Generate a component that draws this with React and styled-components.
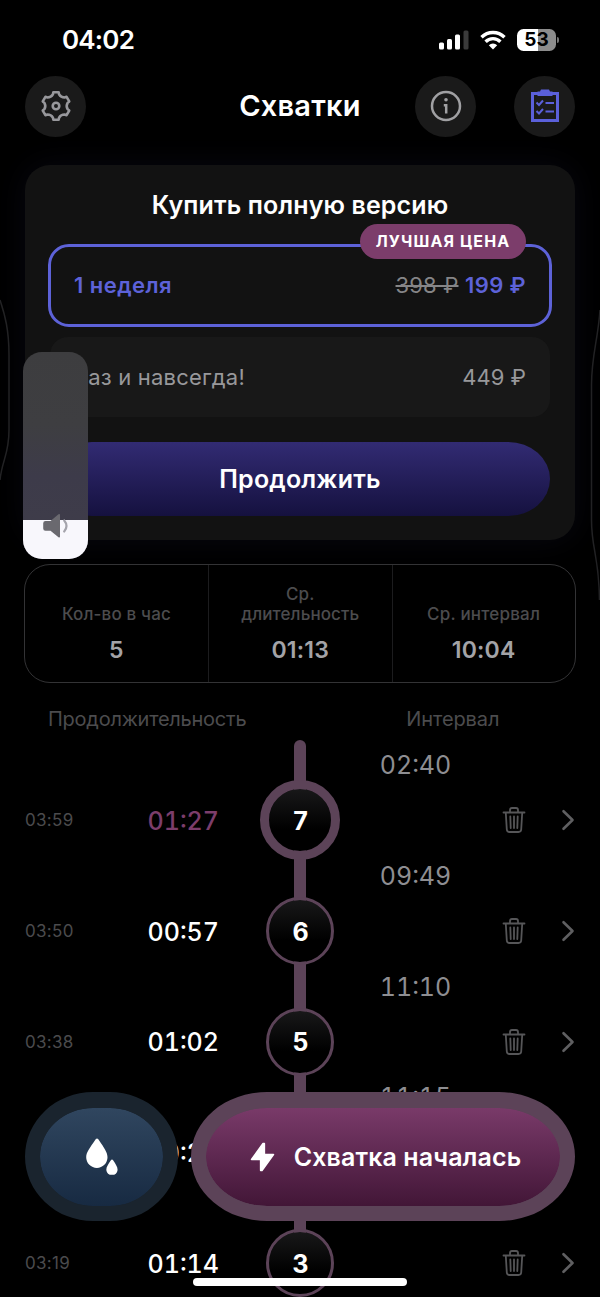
import React from "react";
import styled, { createGlobalStyle } from "styled-components";

const GlobalStyle = createGlobalStyle`
    * { box-sizing: border-box; }
    body {
        margin: 0;
        background: #000;
        font-family: Inter, "Liberation Sans", sans-serif;
        color: #fff;
    }
    button { font-family: inherit; color: inherit; border: none; padding: 0; }
`;

const Screen = styled.div`
    position: relative;
    width: 600px;
    height: 1297px;
    overflow: hidden;
    background: #000;
    white-space: nowrap;
`;

const Label = styled.span`
    font-size: ${(p) => p.$size}px;
    font-weight: ${(p) => p.$weight || 400};
    letter-spacing: ${(p) => p.$track || 0}px;
    color: ${(p) => p.$color || "inherit"};
    line-height: 1.2;
`;

const StatusBar = styled.div`
    display: flex;
    align-items: center;
    justify-content: space-between;
    height: 75px;
    padding: 5px 41px 0 62px;
`;

const StatusIcons = styled.div`
    display: flex;
    align-items: center;
    gap: 11px;
`;

const Battery = styled.div`
    position: relative;
    width: 39px;
    height: 22px;
    margin-right: 3px;
    border-radius: 6.5px;
    background: linear-gradient(90deg, #fff 53%, #8c8c8c 53%);
    color: #000;
    font-size: 19px;
    font-weight: 700;
    line-height: 22px;
    text-align: center;

    &::after {
        content: "";
        position: absolute;
        right: -3px;
        top: 8px;
        width: 2px;
        height: 6px;
        border-radius: 0 2px 2px 0;
        background: #777;
    }
`;

const Header = styled.header`
    display: grid;
    grid-template-columns: 160px 1fr 160px;
    align-items: center;
    height: 62px;
    padding: 0 25px;
    text-align: center;
`;

const HeaderActions = styled.div`
    display: flex;
    justify-content: space-between;
`;

const RoundButton = styled.button`
    display: grid;
    place-items: center;
    width: 61px;
    height: 61px;
    border-radius: 50%;
    background: #1a1a1a;
`;

const Offer = styled.section`
    display: flex;
    flex-direction: column;
    height: 375px;
    margin: 28px 25px 0;
    padding: 25px 25px 24px;
    border-radius: 25px;
    background: #121212;
    box-shadow: 0 0 32px rgba(60, 60, 130, 0.13);
`;

const OfferTitle = styled.h2`
    margin: 0;
    font-size: 25px;
    font-weight: 600;
    letter-spacing: 0.12px;
    line-height: 31px;
    text-align: center;
`;

const Plan = styled.div`
    position: relative;
    display: flex;
    align-items: center;
    justify-content: space-between;
    height: ${(p) => (p.$active ? 83 : 80)}px;
    margin: ${(p) => (p.$active ? "23px -2px 0" : "10px 0 0")};
    padding: 0 ${(p) => (p.$active ? 23 : 24)}px;
    border: ${(p) => (p.$active ? "3px solid #5d62d8" : "none")};
    border-radius: ${(p) => (p.$active ? 21 : 18)}px;
    background: ${(p) => (p.$active ? "transparent" : "#181818")};
`;

const Badge = styled.div`
    position: absolute;
    right: 23px;
    top: -23px;
    display: grid;
    place-items: center;
    width: 166px;
    height: 35px;
    border-radius: 18px;
    background: #7c3d6b;
`;

const Prices = styled.div`
    display: flex;
    gap: 6.5px;

    s { text-decoration-thickness: 1.5px; }
`;

const ContinueButton = styled.button`
    height: 74px;
    margin-top: 25px;
    border-radius: 42px / 37px;
    background: linear-gradient(#322b73, #15113f);
`;

const Stats = styled.section`
    display: grid;
    grid-template-columns: repeat(3, 1fr);
    height: 119px;
    margin: 24px 24px 0;
    border: 1.5px solid #333335;
    border-radius: 26px;
`;

const Stat = styled.div`
    display: flex;
    flex-direction: column;
    align-items: center;
    justify-content: flex-end;
    gap: 13px;
    padding: 0 0.5px 17px 0;
    text-align: center;
    white-space: pre-line;

    & + & { border-left: 1.5px solid #1c1c1e; }
`;

const Columns = styled.div`
    display: flex;
    height: 54px;
    padding: 24px 0 0 48px;

    span:last-child { margin-left: 160px; }
`;

const Timeline = styled.section`
    position: relative;
    font-variant-numeric: tabular-nums;

    &::before {
        content: "";
        position: absolute;
        left: 294px;
        top: 3px;
        bottom: 0;
        width: 12px;
        border-radius: 6px 6px 0 0;
        background: #5c4358;
    }
`;

const Entry = styled.div`
    position: relative;
    display: grid;
    grid-template-rows: 55.35px 55.4px;
    height: 110.75px;
`;

const Interval = styled.div`
    display: flex;
    align-items: center;
    justify-content: center;
    width: 140px;
    padding-top: 1px;
    margin-left: 345.5px;
`;

const EntryLine = styled.div`
    display: grid;
    grid-template-columns: 99px 118px 116px 168px 49px;
    grid-template-rows: 56px;
    align-items: center;
    padding-left: 25px;
`;

const StartTime = styled.div`
    font-variant-numeric: normal;
`;

const Duration = styled.div`
    padding: 1px 0 0 23.5px;
`;

const Node = styled.div`
    display: grid;
    place-items: center;
    place-self: center;
    width: ${(p) => (p.$latest ? 80 : 68)}px;
    height: ${(p) => (p.$latest ? 80 : 68)}px;
    padding: 1px 0 0 1px;
    border: ${(p) => (p.$latest ? 9 : 3)}px solid #5c4358;
    border-radius: 50%;
    background: linear-gradient(#181819, #000 65%) padding-box;
`;

const IconSlot = styled.div`
    display: flex;
    justify-content: flex-end;
`;

const BottomBar = styled.div`
    position: absolute;
    left: 25px;
    right: 25px;
    top: 1092px;
    display: flex;
    justify-content: space-between;
`;

const ActionButton = styled.button`
    display: flex;
    align-items: center;
    justify-content: center;
    gap: 19px;
    width: ${(p) => p.$width}px;
    height: 129px;
    padding-left: ${(p) => p.$shift || 0}px;
    border: solid ${(p) => p.$ring};
    border-width: 16px 15px 15px;
    border-radius: ${(p) => p.$curve}px / 64.5px;
    background: linear-gradient(${(p) => p.$from}, ${(p) => p.$to}) padding-box, ${(p) => p.$ring};
`;

const Volume = styled.div`
    position: absolute;
    left: 23px;
    top: 352px;
    display: flex;
    flex-direction: column;
    justify-content: flex-end;
    width: 65px;
    height: 207px;
    border-radius: 19px;
    overflow: hidden;
    background: linear-gradient(#3d3d3f 0, #3e3e41 35%, #3d3b4a 60%, #3f3d49);

    svg { position: absolute; left: 19px; bottom: 20px; }
`;

const VolumeLevel = styled.div`
    height: 39px;
    background: #f8f7fc;
`;

const Edges = styled.svg`
    position: absolute;
    left: 0;
    top: 280px;
    pointer-events: none;
`;

const HomeIndicator = styled.div`
    position: absolute;
    left: 193px;
    top: 1278px;
    width: 214px;
    height: 8px;
    border-radius: 4px;
    background: #fff;
`;

const polar = (deg, r) => {
    const a = (deg * Math.PI) / 180;
    return `${(16 + r * Math.cos(a)).toFixed(2)} ${(16 + r * Math.sin(a)).toFixed(2)}`;
};

/* six teeth with a hollow between each pair */
const gearPath =
    [0, 1, 2, 3, 4, 5]
        .map((k) => {
            const t = k * 60 - 90;
            return `${k ? "L" : "M"}${polar(t - 11, 14)} L${polar(t + 11, 14)} L${polar(t + 15, 12)} Q${polar(t + 30, 9.8)} ${polar(t + 45, 12)}`;
        })
        .join(" ") + "Z";

const GearIcon = () => (
    <svg width="32" height="32" fill="none" stroke="#98989c" strokeWidth="2.6" strokeLinejoin="round">
        <path d={gearPath} />
        <circle cx="16" cy="16" r="3.3" />
    </svg>
);

const InfoIcon = () => (
    <svg width="32" height="32" fill="none" stroke="#a0a0a3" strokeWidth="2.5">
        <circle cx="16" cy="16" r="14" />
        <path d="M13.8 15.2H16.2V23.5" />
        <circle cx="16" cy="9.8" r="1.8" fill="#a0a0a3" stroke="none" />
    </svg>
);

const ChecklistIcon = () => (
    <svg width="30" height="34" fill="none" stroke="#5b60da" strokeWidth="3">
        <path d="M2.5 4.5H27.5V31.5H2.5Z" />
        <path d="M7.5 2.5H10L11 0.5H19L20 2.5H22.5V7H7.5Z" fill="#5b60da" stroke="none" />
        <path d="M6.5 13.5L9 16L13 11.5M6.5 22L9 24.5L13 20M15.5 14H24M15.5 22.5H24" strokeWidth="2" />
    </svg>
);

const SignalIcon = () => (
    <svg width="30" height="20" fill="#fff">
        <rect x="0" y="12.5" width="5" height="7" rx="1.5" />
        <rect x="8" y="9" width="5" height="10.5" rx="1.5" />
        <rect x="16" y="4.5" width="5" height="15" rx="1.5" />
        <rect x="24.5" y="0.5" width="5" height="19" rx="1.5" fill="#3a3a3a" />
    </svg>
);

const WifiIcon = () => (
    <svg width="26" height="20" fill="none" stroke="#fff" strokeWidth="3.4">
        <path d="M1.5 7.2A16.3 16.3 0 0 1 24.5 7.2" />
        <path d="M5.6 11.7A10.5 10.5 0 0 1 20.4 11.7" />
        <path d="M13 19.5L8.8 15.3A6 6 0 0 1 17.2 15.3Z" fill="#fff" stroke="none" />
    </svg>
);

const TrashIcon = () => (
    <svg width="24" height="28" fill="none" stroke="#565658" strokeWidth="1.8" strokeLinecap="round" strokeLinejoin="round">
        <path d="M1.5 6.5H22.5M8 6V4Q8 2 10 2H14Q16 2 16 4V6" />
        <path d="M3.8 7L4.8 23.5Q5 26 7.5 26H16.5Q19 26 19.2 23.5L20.2 7" />
        <path d="M8.3 10.5L8.7 22M12 10.5V22M15.7 10.5L15.3 22" />
    </svg>
);

const ChevronIcon = () => (
    <svg width="14" height="22" fill="none" stroke="#5f5f61" strokeWidth="2.6" strokeLinecap="round" strokeLinejoin="round">
        <path d="M2.5 2.2L11.5 11L2.5 19.8" />
    </svg>
);

const DropsIcon = () => (
    <svg width="34" height="39" fill="#fff">
        <path d="M12 0.5Q13 0.5 14.5 2.9C18.5 9 22.5 13.8 22.5 19.3A10.6 10.6 0 0 1 1.2 19.3C1.2 13.8 5.5 9 9.5 2.9Q11 0.5 12 0.5Z" />
        <path d="M27 21.5Q27.6 21.5 28.3 22.6C30.6 26.3 32.6 28.9 32.6 31.9A5.7 5.7 0 0 1 21.3 31.9C21.3 28.9 23.4 26.3 25.7 22.6Q26.4 21.5 27 21.5Z" />
    </svg>
);

const BoltIcon = () => (
    <svg width="25" height="30" fill="#fff" stroke="#fff" strokeWidth="1.5" strokeLinejoin="round">
        <path d="M13 1.5L1.5 17.4H10.6V28.5H12L23.5 12.6H14.4V1.5Z" />
    </svg>
);

const SpeakerIcon = () => (
    <svg width="28" height="26" fill="#6a696f">
        <path d="M3.5 8H8.5L16.5 1.2Q18 0.5 18 2V23.5Q18 25 16.5 24.3L8.5 17.8H3.5Q1.2 17.8 1.2 15.5V10.3Q1.2 8 3.5 8Z" />
        <path d="M22.2 7.5Q26.8 13 22.2 18.5" fill="none" stroke="#a5a4ac" strokeWidth="2.2" strokeLinecap="round" />
    </svg>
);

const stats = [
    { label: "Кол-во в час", value: "5", track: 0.15 },
    { label: "Ср.\nдлительность", value: "01:13", track: 0.08 },
    { label: "Ср. интервал", value: "10:04", track: 0.2 },
];

const entries = [
    { number: 7, time: "03:59", duration: "01:27", interval: "02:40" },
    { number: 6, time: "03:50", duration: "00:57", interval: "09:49" },
    { number: 5, time: "03:38", duration: "01:02", interval: "11:10" },
    { duration: "00:21", interval: "11:15" },
    { number: 3, time: "03:19", duration: "01:14" },
];

const ContractionEntry = ({ item, latest }) => (
    <Entry>
        <Interval>
            <Label $size={25} $color="#8e8e92">{item.interval}</Label>
        </Interval>
        <EntryLine>
            <StartTime>
                <Label $size={17} $color="#4b4b4d" $track={0.3}>{item.time}</Label>
            </StartTime>
            <Duration>
                <Label $size={25} $weight={500} $color={latest ? "#7c3d6b" : "#fff"}>{item.duration}</Label>
            </Duration>
            <Node $latest={latest}>
                <Label $size={25} $weight={700}>{item.number}</Label>
            </Node>
            <IconSlot><TrashIcon /></IconSlot>
            <IconSlot><ChevronIcon /></IconSlot>
        </EntryLine>
    </Entry>
);

const App = () => (
    <Screen>
        <GlobalStyle />
        <StatusBar>
            <Label $size={26} $weight={600} $track={-0.8}>04:02</Label>
            <StatusIcons>
                <SignalIcon />
                <WifiIcon />
                <Battery>53</Battery>
            </StatusIcons>
        </StatusBar>

        <Header>
            <RoundButton><GearIcon /></RoundButton>
            <Label $size={29} $weight={600} $track={0.2}>Схватки</Label>
            <HeaderActions>
                <RoundButton><InfoIcon /></RoundButton>
                <RoundButton><ChecklistIcon /></RoundButton>
            </HeaderActions>
        </Header>

        <Offer>
            <OfferTitle>Купить полную версию</OfferTitle>
            <Plan $active>
                <Badge><Label $size={16} $weight={700} $track={1.1}>ЛУЧШАЯ ЦЕНА</Label></Badge>
                <Label $size={22} $weight={600} $color="#5d62d8" $track={0.45}>1 неделя</Label>
                <Prices>
                    <Label as="s" $size={22} $color="#858587" $track={0.1}>398 ₽</Label>
                    <Label $size={22} $weight={600} $color="#5d62d8" $track={0.4}>199 ₽</Label>
                </Prices>
            </Plan>
            <Plan>
                <Label $size={22} $color="#98989b" $track={0.2}>Раз и навсегда!</Label>
                <Label $size={22} $color="#98989b">449 ₽</Label>
            </Plan>
            <ContinueButton><Label $size={25} $weight={600} $track={0.2}>Продолжить</Label></ContinueButton>
        </Offer>

        <Stats>
            {stats.map((s) => (
                <Stat key={s.label}>
                    <Label $size={17} $weight={500} $color="#4c4c4e" $track={s.track}>{s.label}</Label>
                    <Label $size={23} $weight={600} $color="#a3a3a7" $track={0.2}>{s.value}</Label>
                </Stat>
            ))}
        </Stats>

        <Columns>
            <Label $size={20} $color="#4c4c4e" $track={-0.25}>Продолжительность</Label>
            <Label $size={20} $color="#4c4c4e" $track={-0.1}>Интервал</Label>
        </Columns>

        <Timeline>
            {entries.map((item, i) => (
                <ContractionEntry key={item.duration} item={item} latest={i === 0} />
            ))}
        </Timeline>

        <BottomBar>
            <ActionButton $width={153} $curve={68} $ring="#1a242e" $from="#30465f" $to="#172a42">
                <DropsIcon />
            </ActionButton>
            <ActionButton $width={384} $curve={76} $shift={5} $ring="#5c4358" $from="#793a69" $to="#421637">
                <BoltIcon />
                <Label $size={25} $weight={600} $track={0.1}>Схватка началась</Label>
            </ActionButton>
        </BottomBar>

        <Edges width="600" height="330" fill="none" stroke="#222224" strokeWidth="1.5">
            <path d="M0 20C5 35 9 50 9 75V150C9 175 2 180 0 200" />
            <path d="M600 30C598 60 591.5 75 591.5 105V240C591.5 270 599 275 599.5 320" />
        </Edges>

        <Volume>
            <VolumeLevel />
            <SpeakerIcon />
        </Volume>
        <HomeIndicator />
    </Screen>
);

export default App;
